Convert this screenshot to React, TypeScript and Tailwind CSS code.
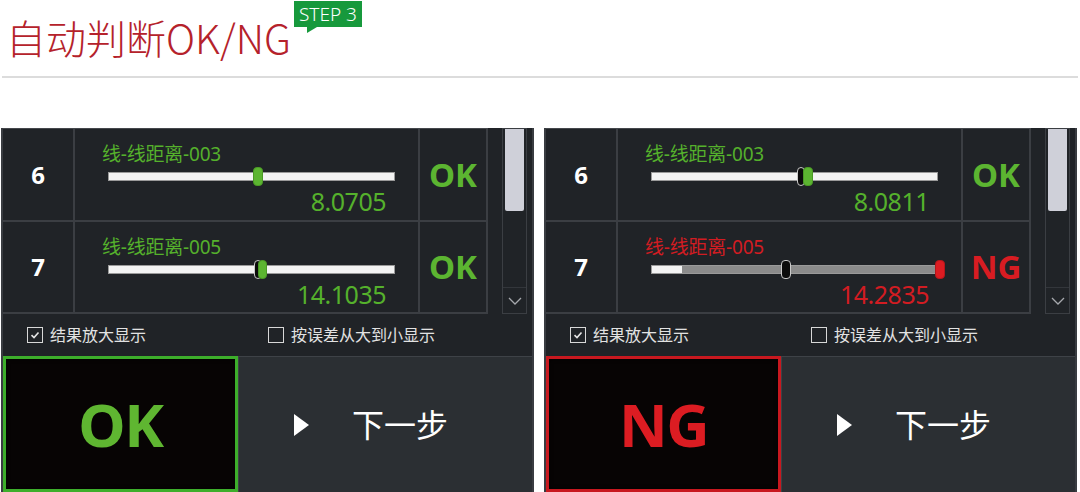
import React from "react";

type ThumbKind = "green" | "black" | "red";
interface Thumb {
  left: number;
  width: number;
  kind: ThumbKind;
}
interface Row {
  no: number;
  label: string;
  value: string;
  ok: boolean;
  fill: number | null; // white part of the track when the rest is greyed out
  thumbs: Thumb[];
}

const THUMB_CLASS: Record<ThumbKind, string> = {
  green: "bg-[#5cb531] border border-[#4a9a25]",
  red: "bg-[#dc1c22] border border-[#b5161b]",
  black: "bg-[#0c0c0c] border-[1.5px] border-[#c9c9c9]",
};

const LEFT_ROWS: Row[] = [
  { no: 6, label: "线-线距离-003", value: "8.0705", ok: true, fill: null, thumbs: [{ left: 144, width: 10, kind: "green" }] },
  {
    no: 7,
    label: "线-线距离-005",
    value: "14.1035",
    ok: true,
    fill: null,
    thumbs: [
      { left: 145, width: 8, kind: "black" },
      { left: 149, width: 9, kind: "green" },
    ],
  },
];

const RIGHT_ROWS: Row[] = [
  {
    no: 6,
    label: "线-线距离-003",
    value: "8.0811",
    ok: true,
    fill: null,
    thumbs: [
      { left: 145, width: 8, kind: "black" },
      { left: 151, width: 10, kind: "green" },
    ],
  },
  {
    no: 7,
    label: "线-线距离-005",
    value: "14.2835",
    ok: false,
    fill: 30,
    thumbs: [
      { left: 129, width: 10, kind: "black" },
      { left: 283, width: 10, kind: "red" },
    ],
  },
];

function Track({ row }: { row: Row }) {
  const grey = row.fill !== null;
  return (
    <div
      className={`relative ml-[33px] h-[9px] w-[287px] border border-[#9a9a9a] ${grey ? "bg-[#8b8b8b]" : "bg-[#f3f3f3]"}`}
    >
      {grey && <div className="h-full bg-[#f3f3f3]" style={{ width: row.fill ?? 0 }} />}
      {row.thumbs.map((t, i) => (
        <div
          key={i}
          className={`absolute top-[-6px] h-[19px] rounded-[4px] ${THUMB_CLASS[t.kind]}`}
          style={{ left: t.left, width: t.width }}
        />
      ))}
    </div>
  );
}

function RowCells({ row }: { row: Row }) {
  const tone = row.ok ? "text-[#55b12c]" : "text-[#d21c22]";
  return (
    <>
      <div className="flex items-center justify-center bg-[#202327] text-[24px] font-bold text-white">{row.no}</div>
      <div className="flex flex-col bg-[#202327]">
        <div className={`ml-[27px] mt-[14px] text-[19px] leading-[22px] tracking-[-0.2px] ${tone}`}>{row.label}</div>
        <div className="mt-[7px]">
          <Track row={row} />
        </div>
        <div className={`mr-[32px] mt-[6px] text-right text-[25px] leading-[28px] tracking-[-0.5px] ${tone}`}>
          {row.value}
        </div>
      </div>
      <div
        className={`flex items-center justify-center bg-[#202327] text-[33px] font-bold ${row.ok ? "text-[#5cb531]" : "text-[#d81c22]"}`}
      >
        {row.ok ? "OK" : "NG"}
      </div>
    </>
  );
}

function Checkbox({ checked, label }: { checked: boolean; label: string }) {
  return (
    <div className="flex items-center gap-[7px]">
      <span className="flex h-[16px] w-[16px] items-center justify-center border-[1.5px] border-[#d8d8d8]">
        {checked && (
          <svg width="10" height="10" viewBox="0 0 10 10">
            <path d="M1.5 5.2 L4 7.5 L8.5 2.5" fill="none" stroke="#e6e6e6" strokeWidth="1.6" />
          </svg>
        )}
      </span>
      <span className="text-[16px] leading-none text-[#e2e2e2]">{label}</span>
    </div>
  );
}

function Panel({ rows, ok }: { rows: Row[]; ok: boolean }) {
  return (
    <section className="flex h-[364px] w-[533px] flex-col border-x-2 border-[#393c41] bg-[#202327]">
      <div className="flex h-[186px]">
        <div className="grid w-[485px] grid-cols-[70px_343px_66px] grid-rows-[91px_90px] gap-[2px] border-t border-[#44474c] bg-[#3b3e43] pb-[2px] pr-[2px]">
          {rows.map((r) => (
            <RowCells key={r.no} row={r} />
          ))}
        </div>
        <div className="ml-[14px] flex w-[25px] flex-col border border-[#3b3e43]">
          <div className="mx-[2px] h-[82px] rounded-b-[2px] bg-[#cfd0d9]" />
          <div className="mt-auto flex h-[26px] items-center justify-center border-t border-[#33363b]">
            <svg width="14" height="8" viewBox="0 0 14 8">
              <path d="M1 1 L7 7 L13 1" fill="none" stroke="#a6a8ad" strokeWidth="1.3" />
            </svg>
          </div>
        </div>
      </div>

      <div className="flex h-[42px] items-center pl-[24px]">
        <div className="w-[241px]">
          <Checkbox checked label="结果放大显示" />
        </div>
        <Checkbox checked={false} label="按误差从大到小显示" />
      </div>

      <div className="flex h-[136px]">
        <div
          className={`flex w-[235px] items-center justify-center border-[3px] bg-[#070404] shadow-[inset_0_0_4px_rgba(0,0,0,0.9)] ${ok ? "border-[#3dae2b]" : "border-[#c8181f]"}`}
        >
          <span
            className={`text-[60px] font-bold leading-none tracking-[-1.5px] ${ok ? "text-[#5fb631]" : "text-[#dc1c22]"}`}
          >
            {ok ? "OK" : "NG"}
          </span>
        </div>
        <button className="flex flex-1 items-center border-l border-t border-[#3e4247] bg-[#2b2f33] pl-[55px]">
          <svg width="15" height="22" viewBox="0 0 15 22">
            <polygon points="0,0 15,11 0,22" fill="#ffffff" />
          </svg>
          <span className="ml-[43px] text-[32px] leading-none text-white">下一步</span>
        </button>
      </div>
    </section>
  );
}

export default function App() {
  return (
    <div className="h-[492px] w-[1080px] overflow-hidden bg-white font-['Noto_Sans','Noto_Sans_CJK_SC',sans-serif]">
      <header className="h-[128px]">
        <div className="flex items-start pl-[6px]">
          <h1 className="mt-[17px] font-['Noto_Sans_CJK_SC',sans-serif] text-[40px] font-light leading-none text-[#b5222b]">
            自动判断OK/NG
          </h1>
          <span className="relative ml-[3px] mt-[1px] flex h-[26px] w-[68px] items-center justify-center bg-[#17993c] text-[19px] font-light leading-none text-white">
            STEP 3
            <span className="absolute left-[13px] top-full h-0 w-0 border-r-[10px] border-t-[6px] border-r-transparent border-t-[#17993c]" />
          </span>
        </div>
        <div className="mx-[2px] mt-[19px] h-[2px] bg-[#dcdcdc]" />
      </header>
      <div className="flex gap-[10px] pl-[1px]">
        <Panel rows={LEFT_ROWS} ok />
        <Panel rows={RIGHT_ROWS} ok={false} />
      </div>
    </div>
  );
}
